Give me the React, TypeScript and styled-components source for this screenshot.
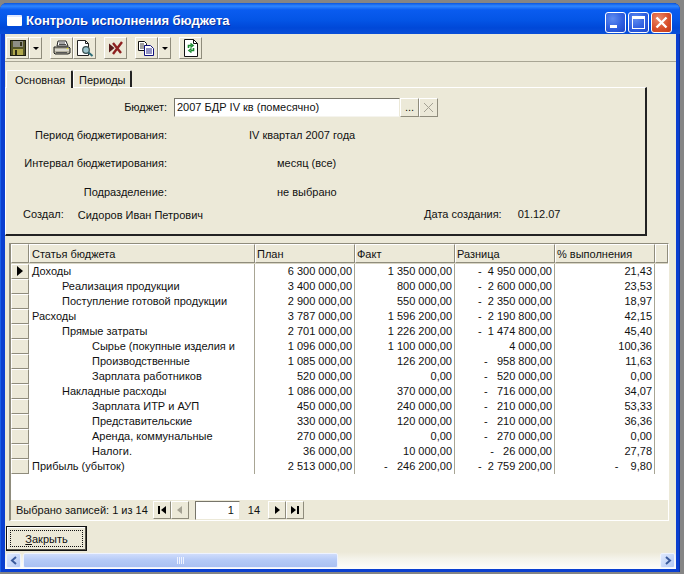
import React from "react";
import styled, { createGlobalStyle } from "styled-components";

const Global = createGlobalStyle`
  html, body { margin: 0; padding: 0; background: #858585; }
  body { width: 684px; height: 574px; overflow: hidden; font-family: "Liberation Sans", Arial, sans-serif; font-size: 11px; color: #111; }
  * { box-sizing: border-box; }
`;

const Win = styled.div`
  width: 680px;
  height: 569px;
  margin-top: 3px;
  background: #0a3fd0;
  border-radius: 7px 7px 0 0;
  display: flex;
  flex-direction: column;
  padding: 0 4px 3px 5px;
  box-shadow: inset -1px 0 0 #0831a8, inset 1px 0 0 #1b5fe8;
`;

const TitleBar = styled.div`
  height: 31px;
  margin: 0 -4px 0 -5px;
  padding: 5px 8px 0 7px;
  border-radius: 7px 7px 0 0;
  background: linear-gradient(180deg, #0a56e0 0%, #2f86ff 10%, #0a5cf0 22%, #0455e6 55%, #0048d8 80%, #0a4fd8 100%);
  display: flex;
  align-items: flex-start;
`;

const AppIcon = styled.span`
  width: 15px;
  height: 11px;
  margin: 7px 4px 0 0;
  background: #fff;
  border-top: 2px solid #dfe8ff;
  border-radius: 1px;
`;

const Title = styled.div`
  flex: 1;
  margin-top: 5px;
  color: #fff;
  font-weight: bold;
  font-size: 13px;
  white-space: nowrap;
  text-shadow: 1px 1px 0 #0a2f9c;
`;

const CapBtn = styled.div<{ $close?: boolean }>`
  width: 21px;
  height: 21px;
  margin: 4px 0 0 2px;
  border: 1px solid #fff;
  border-radius: 3px;
  background: ${(p) =>
    p.$close
      ? "radial-gradient(circle at 35% 30%, #ec8a6c, #d9502c 55%, #c23a18)"
      : "radial-gradient(circle at 35% 30%, #5f8cf0, #2f5fe0 55%, #1c45c8)"};
  display: flex;
  align-items: center;
  justify-content: center;
`;

const Client = styled.div`
  flex: 1;
  background: #ece9d8;
  display: flex;
  flex-direction: column;
  min-height: 0;
`;

const Toolbar = styled.div`
  height: 28px;
  padding: 3px 0 0 1px;
  border-bottom: 1px solid #a8a594;
  display: flex;
  align-items: flex-start;
`;

const ToolBtn = styled.div<{ $narrow?: boolean; $gap?: number }>`
  width: ${(p) => (p.$narrow ? 13 : 23)}px;
  height: 22px;
  margin-left: ${(p) => p.$gap ?? 0}px;
  background: #ece9d8;
  border: 1px solid;
  border-color: #fff #8f8c7c #8f8c7c #fff;
  display: flex;
  align-items: center;
  justify-content: center;
`;

const Caret = styled.span`
  width: 0;
  height: 0;
  border-left: 3px solid transparent;
  border-right: 3px solid transparent;
  border-top: 3px solid #000;
`;

const Tabs = styled.div`
  height: 25px;
  padding: 7px 0 0 1px;
  display: flex;
  align-items: flex-end;
`;

const Tab = styled.div<{ $active?: boolean }>`
  height: ${(p) => (p.$active ? 18 : 17)}px;
  width: ${(p) => (p.$active ? 67 : 59)}px;
  padding: ${(p) => (p.$active ? "3px 0 0 8px" : "3px 0 0 5px")};
  border-top: 1px solid #fff;
  border-left: 1px solid #fff;
  border-right: 2px solid #222;
  border-radius: 2px 2px 0 0;
  background: #ece9d8;
  position: relative;
  z-index: 1;
  margin-bottom: ${(p) => (p.$active ? -1 : 0)}px;
`;

const Panel = styled.div`
  width: 642px;
  height: 149px;
  padding-top: 10px;
  border-top: 1px solid #fff;
  border-left: 1px solid #fff;
  border-right: 2px solid #222;
  border-bottom: 2px solid #222;
  display: flex;
  flex-direction: column;
`;

const FieldRow = styled.div<{ $top?: number }>`
  display: grid;
  grid-template-columns: 161px 1fr;
  column-gap: 7px;
  align-items: center;
  margin-top: ${(p) => p.$top ?? 0}px;
`;

const Label = styled.div`
  text-align: right;
  white-space: nowrap;
`;

const Value = styled.div<{ $indent?: number }>`
  padding-left: ${(p) => p.$indent ?? 0}px;
  white-space: nowrap;
`;

const Lookup = styled.div`
  display: flex;
  align-items: stretch;
  height: 19px;
`;

const LookupInput = styled.div`
  width: 226px;
  background: #fff;
  border: 1px solid;
  border-color: #77756a #ece9d8 #f5f4ee #77756a;
  padding: 2px 0 0 2px;
  white-space: nowrap;
`;

const LookupBtn = styled.div<{ $off?: boolean }>`
  width: 19px;
  background: #ece9d8;
  border: 1px solid;
  border-color: #fff #8f8c7c #8f8c7c #fff;
  display: flex;
  align-items: center;
  justify-content: center;
  color: ${(p) => (p.$off ? "#a5a294" : "#111")};
`;

const CreatedRow = styled.div`
  display: flex;
  margin-top: 10px;
  height: 14px;
  padding-left: 17px;
  white-space: nowrap;
`;

const CreatedName = styled.span`
  margin-left: 14px;
  margin-top: 1px;
`;

const CreatedDate = styled.span<{ $gap: number }>`
  margin-left: ${(p) => p.$gap}px;
`;

const Grid = styled.div`
  width: 660px;
  height: 279px;
  margin: 7px 0 0 4px;
  border-top: 1px solid #8f8c7c;
  border-left: 2px solid #8f8c7c;
  border-right: 1px solid #fff;
  border-bottom: 1px solid #fff;
  background: #fff;
  display: flex;
  flex-direction: column;
`;

const columns = "18px 226px 100px 100px 100px 100px 1fr";

const HeaderRow = styled.div`
  display: grid;
  grid-template-columns: ${columns};
  height: 20px;
  flex: none;
  border-bottom: 1px solid #d8d5c4;
`;

const HeaderCell = styled.div<{ $num?: boolean }>`
  background: #ece9d8;
  border: 1px solid;
  border-color: #fff #8f8c7c #8f8c7c #fff;
  padding: 3px 0 0 ${(p) => (p.$num ? 1 : 2)}px;
  white-space: nowrap;
`;

const Body = styled.div`
  flex: 1;
  min-height: 0;
`;

const Row = styled.div`
  display: grid;
  grid-template-columns: ${columns};
  height: 15px;
`;

const Indicator = styled.div`
  background: #ece9d8;
  border: 1px solid;
  border-color: #fff #8f8c7c #8f8c7c #fff;
  display: flex;
  align-items: center;
  justify-content: center;
`;

const Pointer = styled.span`
  width: 0;
  height: 0;
  border-top: 5px solid transparent;
  border-bottom: 5px solid transparent;
  border-left: 6px solid #000;
`;

const NameCell = styled.div<{ $level: number }>`
  padding: 1px 0 0 ${(p) => 3 + p.$level * 30}px;
  border-right: 1px solid #a8a594;
  white-space: nowrap;
  overflow: hidden;
`;

const NumCell = styled.div`
  padding: 1px 2px 0 0;
  border-right: 1px solid #a8a594;
  text-align: right;
  white-space: pre;
`;

const Footer = styled.div`
  height: 20px;
  flex: none;
  background: #ece9d8;
  display: flex;
  align-items: center;
  padding-left: 5px;
`;

const NavBtn = styled.div<{ $gap?: number }>`
  width: 18px;
  height: 18px;
  margin-left: ${(p) => p.$gap ?? 0}px;
  background: #ece9d8;
  border: 1px solid;
  border-color: #fff #8f8c7c #8f8c7c #fff;
  display: flex;
  align-items: center;
  justify-content: center;
`;

const PageInput = styled.div`
  width: 45px;
  height: 19px;
  margin-left: 6px;
  background: #fff;
  border: 1px solid;
  border-color: #77756a #ece9d8 #ece9d8 #77756a;
  text-align: right;
  padding: 2px 5px 0 0;
`;

const PageTotal = styled.span`
  margin-left: 8px;
  width: 20px;
`;

const CloseRow = styled.div`
  height: 31px;
  padding: 5px 0 0 1px;
  flex: none;
`;

const CloseBtn = styled.div`
  width: 81px;
  height: 25px;
  border: 1px solid #111;
  box-shadow: inset -1px -1px 0 #55534a, inset 1px 1px 0 #fff;
  padding: 3px;
`;

const CloseFocus = styled.div`
  height: 100%;
  border: 1px dotted #111;
  text-align: center;
  padding-top: 2px;
  u { text-decoration: underline; }
`;

const Scroll = styled.div`
  height: 17px;
  flex: none;
  background: linear-gradient(180deg, #ece9d8 0%, #f4f3ea 40%, #fdfdfb 100%);
  display: flex;
  padding: 0 1px;
`;

const ScrollArrow = styled.div`
  width: 15px;
  height: 15px;
  margin-top: 1px;
  border: 1px solid #eef3ff;
  border-radius: 2px;
  background: linear-gradient(135deg, #dfe9fd, #b3c8f5);
  display: flex;
  align-items: center;
  justify-content: center;
`;

const Thumb = styled.div`
  width: 315px;
  margin: 1px 0 1px 2px;
  border: 1px solid #eef3ff;
  border-radius: 2px;
  background: linear-gradient(180deg, #cfdcfb, #b4c9f6 50%, #a9c0f2);
  display: flex;
  align-items: center;
  justify-content: center;
`;

const ScrollSpace = styled.div`
  flex: 1;
`;

const Grip = () => (
  <svg width="8" height="7" viewBox="0 0 8 7">
    <path d="M0.5 0v7M2.5 0v7M4.5 0v7M6.5 0v7" stroke="#eef3ff" />
  </svg>
);

const Chevron = ({ left }: { left?: boolean }) => (
  <svg width="8" height="9" viewBox="0 0 8 9">
    <path d={left ? "M6 1 2 4.5 6 8" : "M2 1 6 4.5 2 8"} fill="none" stroke="#3a5a9c" strokeWidth="2" />
  </svg>
);

const SaveIcon = () => (
  <svg width="16" height="16" viewBox="0 0 16 16">
    <rect x="0.5" y="0.5" width="15" height="15" fill="#55552a" stroke="#1c1c10" />
    <rect x="3" y="1" width="10" height="6" fill="#8e8e86" />
    <rect x="10" y="2" width="2" height="4" fill="#33331c" />
    <rect x="3" y="9" width="10" height="6" fill="#b0a84c" />
    <rect x="5" y="10" width="2" height="5" fill="#2a2a16" />
  </svg>
);

const PrintIcon = () => (
  <svg width="18" height="16" viewBox="0 0 18 16">
    <path d="M5 1h8l2 5H4z" fill="#fff" stroke="#222" />
    <path d="M6 3h6M6 4.5h7" stroke="#222" strokeWidth="0.8" />
    <path d="M1 7h15l1 1v5l-2 1H2l-1-1z" fill="#b4b1a0" stroke="#222" />
    <path d="M2 10h14" stroke="#fff" />
    <path d="M3 12.5h11" stroke="#555" />
    <circle cx="14.5" cy="8.5" r="0.8" fill="#e8e020" />
  </svg>
);

const PreviewIcon = () => (
  <svg width="18" height="17" viewBox="0 0 18 17">
    <path d="M1.5 0.5h8l3 3v12h-11z" fill="#fff" stroke="#222" />
    <path d="M9.5 0.5v3h3" fill="none" stroke="#222" />
    <circle cx="10" cy="10" r="3.3" fill="#9cc4cc" stroke="#3a5050" strokeWidth="1.2" />
    <path d="M12.5 12.5 16.5 16" stroke="#2e6c78" strokeWidth="2" />
  </svg>
);

const DeleteIcon = () => (
  <svg width="16" height="14" viewBox="0 0 16 14">
    <path d="M1 2.5v9l5.5-4.5z" fill="#5a1c1c" />
    <path d="M5 2l8 10M14 1 5 13" stroke="#8e2020" strokeWidth="2.4" />
  </svg>
);

const CopyIcon = () => (
  <svg width="17" height="15" viewBox="0 0 17 15">
    <path d="M0.5 0.5h6l2 2v7h-8z" fill="#fff" stroke="#111" />
    <path d="M2 3h4M2 5h5M2 7h5" stroke="#111" strokeWidth="0.8" />
    <path d="M6.5 4.5h6l3 3v7h-9z" fill="#fff" stroke="#10107c" />
    <path d="M8 8h6M8 10h6M8 12h6" stroke="#10107c" strokeWidth="0.9" />
  </svg>
);

const RefreshIcon = () => (
  <svg width="14" height="18" viewBox="0 0 14 18">
    <path d="M0.5 0.5h9l4 4v13h-13z" fill="#fff" stroke="#111" />
    <path d="M9.5 0.5v4h4" fill="none" stroke="#111" />
    <path d="M4.5 9V6.5h3M6.5 4.5l2.5 2-2.5 2" fill="none" stroke="#1c8a30" strokeWidth="1.6" />
    <path d="M9.5 9v2.5h-3M7.5 9.5l-2.5 2 2.5 2" fill="none" stroke="#1c8a30" strokeWidth="1.6" />
  </svg>
);

const NavIcon = ({ d, color = "#000" }: { d: string; color?: string }) => (
  <svg width="10" height="10" viewBox="0 0 10 10">
    <path d={d} fill={color} />
  </svg>
);

type Item = [string, number, string, string, string, string];

const rows: Item[] = [
  ["Доходы", 0, "6 300 000,00", "1 350 000,00", "-  4 950 000,00", "21,43"],
  ["Реализация продукции", 1, "3 400 000,00", "800 000,00", "-  2 600 000,00", "23,53"],
  ["Поступление готовой продукции", 1, "2 900 000,00", "550 000,00", "-  2 350 000,00", "18,97"],
  ["Расходы", 0, "3 787 000,00", "1 596 200,00", "-  2 190 800,00", "42,15"],
  ["Прямые затраты", 1, "2 701 000,00", "1 226 200,00", "-  1 474 800,00", "45,40"],
  ["Сырье (покупные изделия и", 2, "1 096 000,00", "1 100 000,00", "4 000,00", "100,36"],
  ["Производственные", 2, "1 085 000,00", "126 200,00", "-   958 800,00", "11,63"],
  ["Зарплата работников", 2, "520 000,00", "0,00", "-   520 000,00", "0,00"],
  ["Накладные расходы", 1, "1 086 000,00", "370 000,00", "-   716 000,00", "34,07"],
  ["Зарплата ИТР и АУП", 2, "450 000,00", "240 000,00", "-   210 000,00", "53,33"],
  ["Представительские", 2, "330 000,00", "120 000,00", "-   210 000,00", "36,36"],
  ["Аренда, коммунальные", 2, "270 000,00", "0,00", "-   270 000,00", "0,00"],
  ["Налоги.", 2, "36 000,00", "10 000,00", "-   26 000,00", "27,78"],
  ["Прибыль (убыток)", 0, "2 513 000,00", "-   246 200,00", "-  2 759 200,00", "-    9,80"],
];

const App = () => (
  <>
    <Global />
    <Win>
      <TitleBar>
        <AppIcon />
        <Title>Контроль исполнения бюджета</Title>
        <CapBtn>
          <svg width="15" height="15" viewBox="0 0 15 15">
            <rect x="2" y="10" width="7" height="3" fill="#fff" />
          </svg>
        </CapBtn>
        <CapBtn>
          <svg width="15" height="15" viewBox="0 0 15 15">
            <rect x="1.5" y="1.5" width="12" height="12" fill="none" stroke="#fff" />
            <rect x="1" y="1" width="13" height="3" fill="#fff" />
          </svg>
        </CapBtn>
        <CapBtn $close>
          <svg width="15" height="15" viewBox="0 0 15 15">
            <path d="M2.5 2.5l10 10M12.5 2.5l-10 10" stroke="#fff" strokeWidth="2.4" />
          </svg>
        </CapBtn>
      </TitleBar>
      <Client>
        <Toolbar>
          <ToolBtn><SaveIcon /></ToolBtn>
          <ToolBtn $narrow><Caret /></ToolBtn>
          <ToolBtn $gap={8}><PrintIcon /></ToolBtn>
          <ToolBtn><PreviewIcon /></ToolBtn>
          <ToolBtn $gap={8}><DeleteIcon /></ToolBtn>
          <ToolBtn $gap={8}><CopyIcon /></ToolBtn>
          <ToolBtn $narrow><Caret /></ToolBtn>
          <ToolBtn $gap={8}><RefreshIcon /></ToolBtn>
        </Toolbar>
        <Tabs>
          <Tab $active>Основная</Tab>
          <Tab>Периоды</Tab>
        </Tabs>
        <Panel>
          <FieldRow>
            <Label>Бюджет:</Label>
            <Lookup>
              <LookupInput>2007 БДР IV кв (помесячно)</LookupInput>
              <LookupBtn>...</LookupBtn>
              <LookupBtn $off>
                <svg width="11" height="11" viewBox="0 0 11 11">
                  <path d="M1 1l9 9M10 1l-9 9" stroke="#a5a294" />
                </svg>
              </LookupBtn>
            </Lookup>
          </FieldRow>
          <FieldRow $top={12}>
            <Label>Период бюджетирования:</Label>
            <Value $indent={75}>IV квартал 2007 года</Value>
          </FieldRow>
          <FieldRow $top={16}>
            <Label>Интервал бюджетирования:</Label>
            <Value $indent={103}>месяц (все)</Value>
          </FieldRow>
          <FieldRow $top={17}>
            <Label>Подразделение:</Label>
            <Value $indent={103}>не выбрано</Value>
          </FieldRow>
          <CreatedRow>
            <span>Создал:</span>
            <CreatedName>Сидоров Иван Петрович</CreatedName>
            <CreatedDate $gap={221}>Дата создания:</CreatedDate>
            <CreatedDate $gap={16}>01.12.07</CreatedDate>
          </CreatedRow>
        </Panel>
        <Grid>
          <HeaderRow>
            <HeaderCell />
            <HeaderCell>Статья бюджета</HeaderCell>
            <HeaderCell $num>План</HeaderCell>
            <HeaderCell $num>Факт</HeaderCell>
            <HeaderCell $num>Разница</HeaderCell>
            <HeaderCell $num>% выполнения</HeaderCell>
            <HeaderCell />
          </HeaderRow>
          <Body>
            {rows.map(([name, level, plan, fact, diff, pct], i) => (
              <Row key={i}>
                <Indicator>{i === 0 && <Pointer />}</Indicator>
                <NameCell $level={level}>{name}</NameCell>
                <NumCell>{plan}</NumCell>
                <NumCell>{fact}</NumCell>
                <NumCell>{diff}</NumCell>
                <NumCell>{pct}</NumCell>
              </Row>
            ))}
          </Body>
          <Footer>
            <span>Выбрано записей: 1 из 14</span>
            <NavBtn $gap={5}><NavIcon d="M1 1h2v8H1zM9 1v8L4 5z" /></NavBtn>
            <NavBtn><NavIcon d="M7 1v8L2 5z" color="#a5a294" /></NavBtn>
            <PageInput>1</PageInput>
            <PageTotal>14</PageTotal>
            <NavBtn><NavIcon d="M3 1v8l5-4z" /></NavBtn>
            <NavBtn><NavIcon d="M1 1v8l5-4zM7 1h2v8H7z" /></NavBtn>
          </Footer>
        </Grid>
        <CloseRow>
          <CloseBtn>
            <CloseFocus><u>З</u>акрыть</CloseFocus>
          </CloseBtn>
        </CloseRow>
        <Scroll>
          <ScrollArrow><Chevron left /></ScrollArrow>
          <Thumb><Grip /></Thumb>
          <ScrollSpace />
          <ScrollArrow><Chevron /></ScrollArrow>
        </Scroll>
      </Client>
    </Win>
  </>
);

export default App;
